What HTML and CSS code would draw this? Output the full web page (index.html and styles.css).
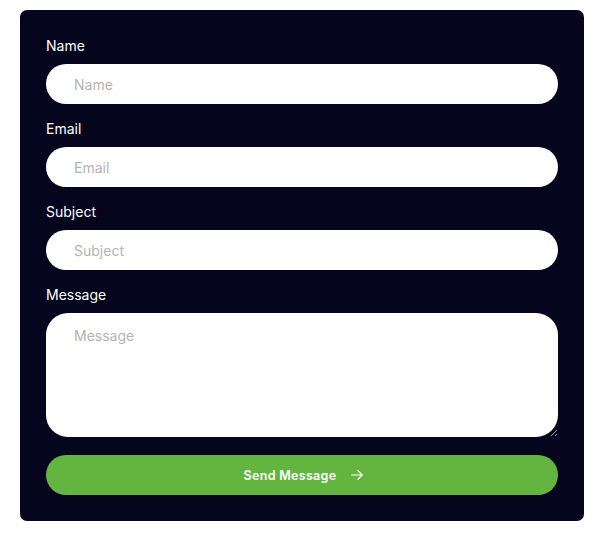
FILE: index.html
```html
<!DOCTYPE html>
<html lang="en">
<head>
  <meta charset="UTF-8" />
  <meta name="viewport" content="width=device-width, initial-scale=1.0" />
  <title>Contact</title>
  <link rel="stylesheet" href="styles.css">
</head>
<body>
  <form class="contact-card">
    <div class="field">
      <label for="name">Name</label>
      <input id="name" type="text" placeholder="Name">
    </div>
    <div class="field">
      <label for="email">Email</label>
      <input id="email" type="email" placeholder="Email">
    </div>
    <div class="field">
      <label for="subject">Subject</label>
      <input id="subject" type="text" placeholder="Subject">
    </div>
    <div class="field">
      <label for="message">Message</label>
      <textarea id="message" placeholder="Message"></textarea>
    </div>
    <button type="button" class="send-btn">
      Send Message
      <svg viewBox="0 0 16 16" fill="none" stroke="currentColor" stroke-width="1.4" stroke-linecap="round" stroke-linejoin="round"><path d="M2 8h12M9 3l5 5-5 5"/></svg>
    </button>
  </form>
</body>
</html>
```

FILE: styles.css
```css
* { box-sizing: border-box; margin: 0; padding: 0; }
body {
  font-family: 'Inter', 'Liberation Sans', sans-serif;
  background: #ffffff;
  padding: 10px 16px 0 20px;
}
.contact-card {
  background: #05051d;
  border-radius: 7px;
  padding: 26px 26px 26px;
  display: flex;
  flex-direction: column;
  gap: 15px;
}
.field {
  display: flex;
  flex-direction: column;
  gap: 8px;
}
.field label {
  color: #ffffff;
  font-size: 14px;
  line-height: 20px;
}
.field input,
.field textarea {
  display: block;
  width: 100%;
  border: none;
  background: #ffffff;
  font-family: inherit;
  font-size: 14px;
  color: #222;
  outline: none;
}
.field input {
  height: 40px;
  border-radius: 20px;
  padding: 0 28px;
}
.field textarea {
  height: 124px;
  border-radius: 22px;
  padding: 14px 28px;
}
.field input::placeholder,
.field textarea::placeholder { color: #b3b3b3; }
.send-btn {
  margin-top: 3px;
  height: 40px;
  border: none;
  border-radius: 20px;
  background: #63b540;
  color: #ffffff;
  font-family: inherit;
  font-size: 12.5px;
  font-weight: 600;
  letter-spacing: 0.3px;
  display: flex;
  align-items: center;
  justify-content: center;
  gap: 14px;
  padding-left: 4px;
  cursor: pointer;
}
.send-btn svg { width: 14px; height: 14px; }
```
